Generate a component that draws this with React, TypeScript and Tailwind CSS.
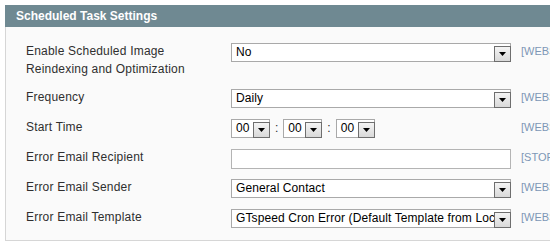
import React from "react";

const font = "font-['Liberation_Sans',Arial,sans-serif]";

function DropButton() {
  return (
    <div className="mb-[-1px] mr-[-1px] flex h-[16px] w-[17px] shrink-0 items-center justify-center self-end border border-[#6e6e6e] bg-gradient-to-b from-[#f4f4f4] to-[#d9d9d9]">
      <svg width="7" height="4" viewBox="0 0 7 4">
        <polygon points="0,0 7,0 3.5,4" fill="#000" />
      </svg>
    </div>
  );
}

function Select({ value, width = "w-[280px]" }: { value: string; width?: string }) {
  return (
    <div className={`flex h-[19px] ${width} items-center border border-[#a9a9a9] bg-white`}>
      <span className="min-w-0 flex-1 overflow-hidden whitespace-nowrap pl-[4px] text-[12px] leading-[17px] tracking-[0.1px] text-black">
        {value}
      </span>
      <DropButton />
    </div>
  );
}

function Row({
  label,
  tall,
  scope,
  children,
}: {
  label: React.ReactNode;
  tall?: boolean;
  scope: string;
  children: React.ReactNode;
}) {
  return (
    <div className={`flex items-start ${tall ? "h-[46px]" : "h-[30px]"}`}>
      <div className="mt-[-1px] w-[205px] shrink-0 text-[12px] leading-[18px] tracking-[0.2px] text-[#2f2f2f]">
        {label}
      </div>
      <div className="w-[280px] shrink-0">{children}</div>
      <div className="ml-[10px] whitespace-nowrap text-[11px] leading-[17px] text-[#7d97b6]">
        {scope}
      </div>
    </div>
  );
}

export default function App() {
  return (
    <div className={`h-[250px] w-[550px] overflow-hidden bg-white pl-[5px] pt-[5px] ${font}`}>
      <div className="w-[620px]">
        {/* section header */}
        <div className="flex h-[22px] items-center bg-[#6f8992] pl-[11px] text-[12px] font-bold text-white">
          Scheduled Task Settings
        </div>

        {/* fieldset */}
        <div className="border border-t-0 border-[#d6d6d6] bg-[#fafafa] pb-[1px] pl-[20px] pt-[16px]">
          <Row
            tall
            scope="[WEBSITE]"
            label={
              <>
                Enable Scheduled Image
                <br />
                Reindexing and Optimization
              </>
            }
          >
            <Select value="No" />
          </Row>

          <Row label="Frequency" scope="[WEBSITE]">
            <Select value="Daily" />
          </Row>

          <Row label="Start Time" scope="[WEBSITE]">
            <div className="flex items-center text-[12px] text-[#2f2f2f]">
              <Select value="00" width="w-[39px]" />
              <span className="px-[5px] leading-[19px]">:</span>
              <Select value="00" width="w-[39px]" />
              <span className="px-[5px] leading-[19px]">:</span>
              <Select value="00" width="w-[39px]" />
            </div>
          </Row>

          <Row label="Error Email Recipient" scope="[STORE VIEW]">
            <div className="h-[20px] w-[280px] border border-[#b4b4b4] bg-white" />
          </Row>

          <Row label="Error Email Sender" scope="[WEBSITE]">
            <Select value="General Contact" />
          </Row>

          <Row label="Error Email Template" scope="[WEBSITE]">
            <Select value="GTspeed Cron Error (Default Template from Locale)" />
          </Row>
        </div>
      </div>
    </div>
  );
}
